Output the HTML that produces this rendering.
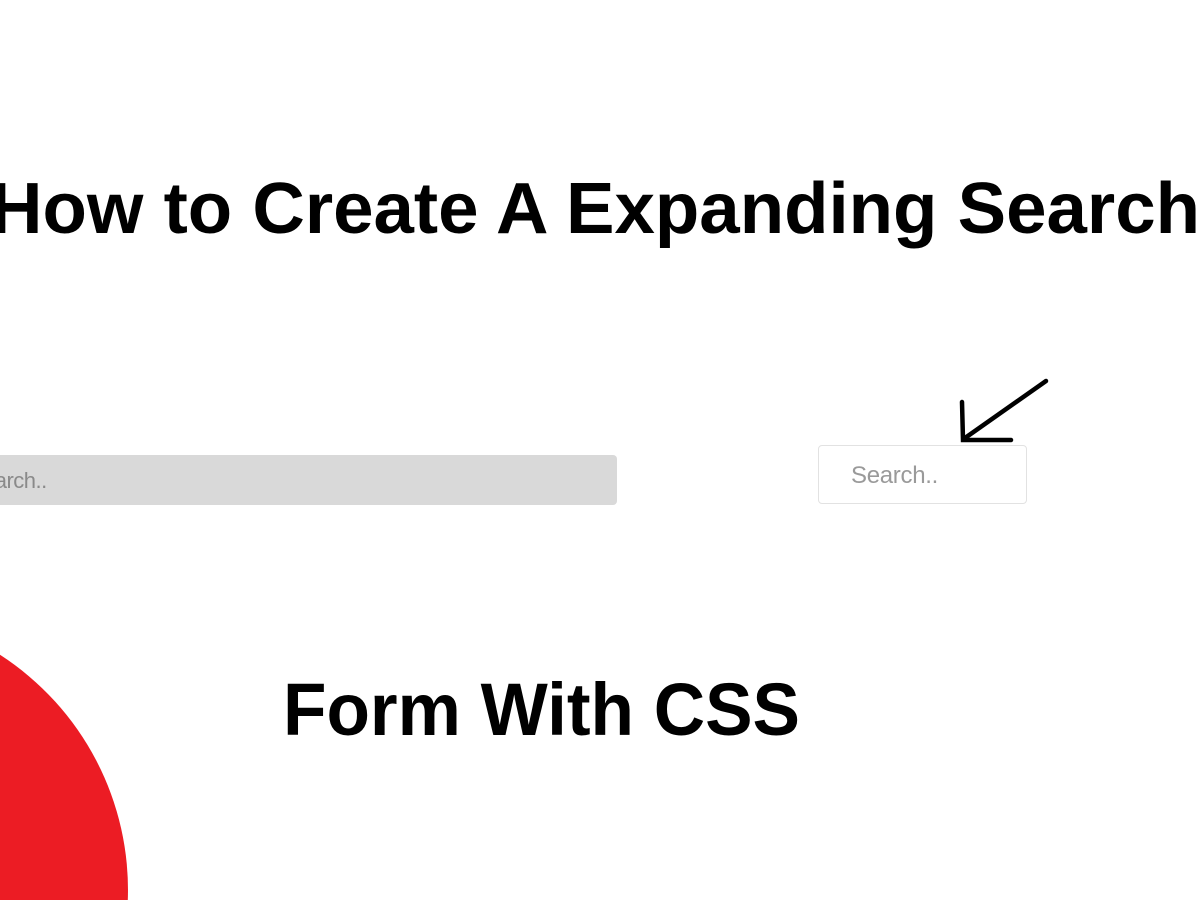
<!DOCTYPE html>
<html><head><meta charset="utf-8"><style>
html{overflow:hidden;width:1200px;height:900px}
html,body{margin:0;padding:0;background:#fff;font-family:"Liberation Sans",sans-serif}
body{width:1200px;height:900px;overflow:hidden;position:relative}
.gray{position:absolute;left:0;top:455px;width:617px;height:50px;background:#d9d9d9;border-radius:0 4px 4px 0;overflow:hidden}
.gray span{position:absolute;left:-17px;top:13px;font-size:22px;color:#8a8a8a;letter-spacing:-0.5px;white-space:nowrap}
.white{position:absolute;left:818px;top:445px;width:207px;height:57px;border:1px solid #e2e2e2;border-radius:4px;background:#fff}
.white span{position:absolute;left:32px;top:16px;font-size:24px;color:#9a9a9a;letter-spacing:-0.3px}
svg{position:absolute;left:0;top:0;display:block;overflow:hidden}
</style></head><body>
<div class="gray"><span>earch..</span></div>
<div class="white"><span>Search..</span></div>
<svg width="1200" height="900" viewBox="0 0 1200 900">
<path d="M0 654.8 A280 280 0 0 1 127.8 900 L0 900 Z" fill="#ec1c24"/>
<text x="-10" y="233" font-family="Liberation Sans, sans-serif" font-weight="bold" font-size="72" textLength="1210" lengthAdjust="spacingAndGlyphs" fill="#000">How to Create A Expanding Search</text>
<text x="283" y="735" font-family="Liberation Sans, sans-serif" font-weight="bold" font-size="74" textLength="517" lengthAdjust="spacingAndGlyphs" fill="#000">Form With CSS</text>
<g stroke="#000" stroke-width="4.5" stroke-linecap="round" fill="none">
<path d="M1046 381 L965 438"/>
<path d="M962 402 L963 440 L1011 440"/>
</g>
</svg>
</body></html>
